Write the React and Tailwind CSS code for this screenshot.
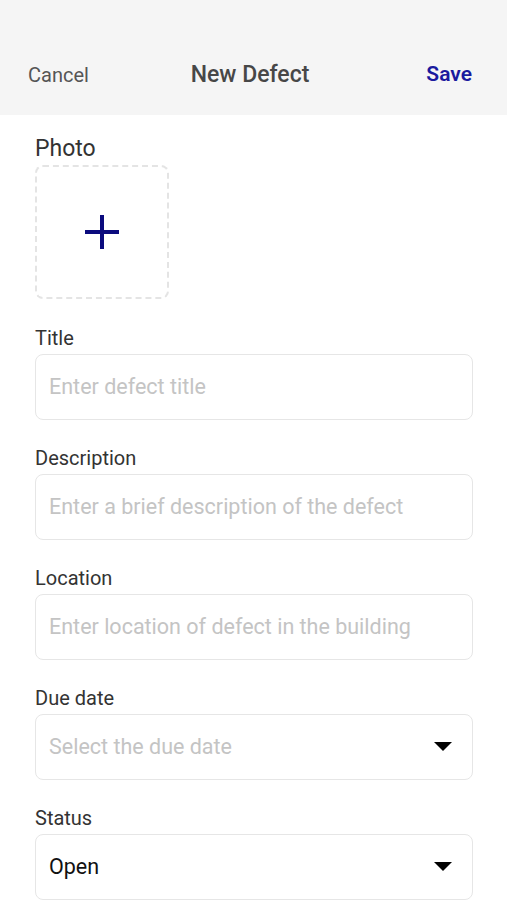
import React from "react";

const Caret = () => (
  <svg width="18" height="10" viewBox="0 0 18 10" className="shrink-0">
    <path d="M0 0 H18 L9 9 Z" fill="#000" />
  </svg>
);

const Field = ({ label, placeholder, value, select }) => (
  <div className="flex flex-col pb-[26px]">
    <label className="text-[20px] leading-[24px] text-[#333] mb-[4px]">{label}</label>
    <div className="h-[66px] border border-[#e6e6e6] rounded-[8px] bg-white flex items-center justify-between pl-[13px] pr-[20px]">
      {value ? (
        <span className="text-[21.5px] text-[#111]">{value}</span>
      ) : (
        <span className="text-[21.5px] text-[#c4c4c4]">{placeholder}</span>
      )}
      {select && <Caret />}
    </div>
  </div>
);

export default function App() {
  return (
    <div className="w-[507px] h-[900px] overflow-hidden bg-white" style={{ fontFamily: "Roboto, 'Noto Sans', sans-serif" }}>
      <div className="h-[115px] bg-[#f5f5f5] pt-[35px] pl-[28px] pr-[35px] flex items-center justify-between">
        <button className="text-[20px] text-[#555] w-[80px] text-left">Cancel</button>
        <h1 className="text-[23px] font-medium text-[#474747]">New Defect</h1>
        <button className="text-[21px] font-semibold text-[#1a1a9e] w-[80px] text-right">Save</button>
      </div>

      <div className="pl-[35px] pr-[34px] pt-[20px]">
        <div className="text-[23px] leading-[28px] text-[#333]">Photo</div>
        <div className="mt-[2px] w-[134px] h-[134px] border-2 border-dashed border-[#e4e4e4] rounded-[8px] flex items-center justify-center">
          <svg width="34" height="34" viewBox="0 0 34 34">
            <path d="M17 0 V34 M0 17 H34" stroke="#0b0b7e" strokeWidth="4" />
          </svg>
        </div>

        <div className="mt-[27px]">
          <Field label="Title" placeholder="Enter defect title" />
          <Field label="Description" placeholder="Enter a brief description of the defect" />
          <Field label="Location" placeholder="Enter location of defect in the building" />
          <Field label="Due date" placeholder="Select the due date" select />
          <Field label="Status" value="Open" select />
        </div>
      </div>
    </div>
  );
}
